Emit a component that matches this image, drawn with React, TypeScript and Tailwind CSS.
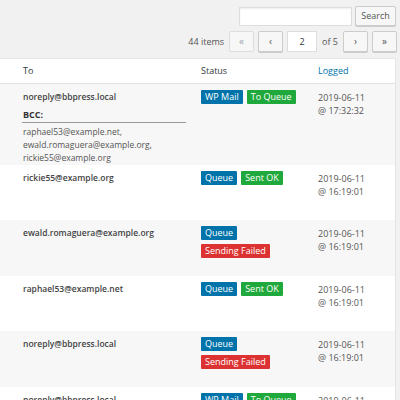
import React from "react";

type Badge = { label: string; tone: "blue" | "green" | "red" };

interface LogRow {
    to: string;
    bcc?: string[];
    badges: Badge[];
    date: string;
    time: string;
    height: string;
}

const rows: LogRow[] = [
    {
        to: "noreply@bbpress.local",
        bcc: [
            "raphael53@example.net,",
            "ewald.romaguera@example.org,",
            "rickie55@example.org",
        ],
        badges: [
            { label: "WP Mail", tone: "blue" },
            { label: "To Queue", tone: "green" },
        ],
        date: "2019-06-11",
        time: "@ 17:32:32",
        height: "h-[81px]",
    },
    {
        to: "rickie55@example.org",
        badges: [
            { label: "Queue", tone: "blue" },
            { label: "Sent OK", tone: "green" },
        ],
        date: "2019-06-11",
        time: "@ 16:19:01",
        height: "h-[55px]",
    },
    {
        to: "ewald.romaguera@example.org",
        badges: [
            { label: "Queue", tone: "blue" },
            { label: "Sending Failed", tone: "red" },
        ],
        date: "2019-06-11",
        time: "@ 16:19:01",
        height: "h-[56px]",
    },
    {
        to: "raphael53@example.net",
        badges: [
            { label: "Queue", tone: "blue" },
            { label: "Sent OK", tone: "green" },
        ],
        date: "2019-06-11",
        time: "@ 16:19:01",
        height: "h-[55px]",
    },
    {
        to: "noreply@bbpress.local",
        badges: [
            { label: "Queue", tone: "blue" },
            { label: "Sending Failed", tone: "red" },
        ],
        date: "2019-06-11",
        time: "@ 16:19:01",
        height: "h-[56px]",
    },
    {
        to: "noreply@bbpress.local",
        badges: [
            { label: "WP Mail", tone: "blue" },
            { label: "To Queue", tone: "green" },
        ],
        date: "2019-06-11",
        time: "@ 16:19:01",
        height: "h-[56px]",
    },
];

const toneClass = {
    blue: "bg-[#0073aa]",
    green: "bg-[#1fa83b]",
    red: "bg-[#dc3232]",
};

const StatusBadge = ({ badge }: { badge: Badge }) => (
    <span
        className={`${toneClass[badge.tone]} text-white h-[14px] leading-[14px] px-[4px] rounded-[1px] whitespace-nowrap`}
    >
        {badge.label}
    </span>
);

const NavButton = ({ label, disabled }: { label: string; disabled?: boolean }) => (
    <span
        className={`w-[25px] h-[21px] flex items-center justify-center rounded-[2px] border bg-[#f7f7f7] text-[10px] ${
            disabled
                ? "border-[#ddd] text-[#a0a5aa]"
                : "border-[#ccc] text-[#555] shadow-[0_1px_0_#ccc]"
        }`}
    >
        {label}
    </span>
);

export default function App() {
    return (
        <div className="w-[400px] h-[400px] overflow-hidden bg-[#f1f1f1] font-['Open_Sans',sans-serif] text-[9px] text-[#555]">
            {/* Search box */}
            <div className="flex justify-end items-center gap-[3px] pt-[6px] pr-[4px]">
                <div className="w-[113px] h-[19px] bg-white border border-[#ddd] shadow-[inset_0_1px_2px_rgba(0,0,0,0.07)]" />
                <button className="w-[41px] h-[20px] border border-[#ccc] bg-[#f7f7f7] rounded-[2px] text-[#555] text-[9px] shadow-[0_1px_0_#ccc]">
                    Search
                </button>
            </div>

            {/* Pagination */}
            <div className="flex justify-end items-center pt-[5px] pr-[3px]">
                <span className="mr-[5px] text-[#555]">44 items</span>
                <div className="flex items-center gap-[4px]">
                    <NavButton label="«" disabled />
                    <NavButton label="‹" />
                    <div className="w-[30px] h-[21px] bg-white border border-[#ddd] flex items-center justify-center text-[#32373c]">
                        2
                    </div>
                    <span className="mx-[1px] text-[#555]">of 5</span>
                    <NavButton label="›" />
                    <NavButton label="»" />
                </div>
            </div>

            {/* Table */}
            <div className="mt-[6px] w-[396px] bg-white border-t border-r border-[#e5e5e5]">
                <div className="grid grid-cols-[201px_117px_1fr] h-[25px] items-center border-b border-[#e1e1e1] text-[#32373c]">
                    <span className="pl-[23px]">To</span>
                    <span>Status</span>
                    <span className="text-[#0073aa]">Logged</span>
                </div>
                {rows.map((row, i) => (
                    <div
                        key={i}
                        className={`grid grid-cols-[201px_117px_1fr] pt-[6px] leading-[13px] ${row.height} ${
                            i % 2 === 0 ? "bg-[#f7f7f7]" : "bg-white"
                        }`}
                    >
                        <div className="pl-[22px] pr-[15px]">
                            <div className="pl-[1px] font-semibold text-[8.5px] text-[#444]">{row.to}</div>
                            {row.bcc && (
                                <div>
                                    <div className="mt-[5px] pl-[1px] font-bold text-[#333] border-b border-[#999] pb-[1px]">
                                        BCC:
                                    </div>
                                    <div className="pt-[2px] pl-[1px] text-[8.5px]">
                                        {row.bcc.map((b) => (
                                            <div key={b}>{b}</div>
                                        ))}
                                    </div>
                                </div>
                            )}
                        </div>
                        <div className="w-[100px] flex flex-wrap gap-[4px] content-start">
                            {row.badges.map((b) => (
                                <StatusBadge key={b.label} badge={b} />
                            ))}
                        </div>
                        <div className="pt-[1px]">
                            <div>{row.date}</div>
                            <div>{row.time}</div>
                        </div>
                    </div>
                ))}
            </div>
        </div>
    );
}
